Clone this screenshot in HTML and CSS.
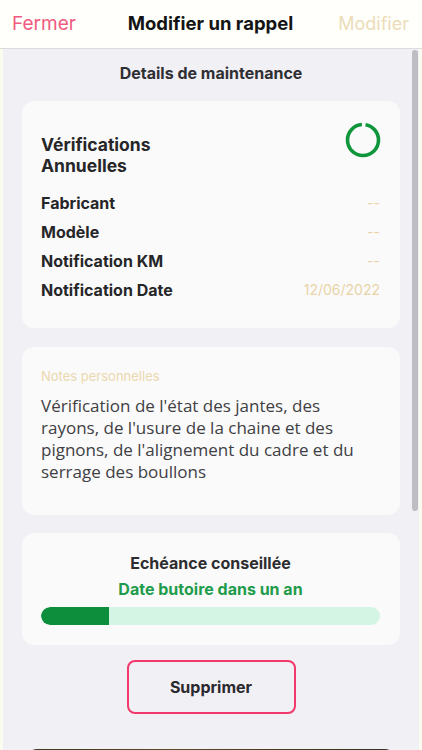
FILE: index.html
```html
<!DOCTYPE html>
<html lang="fr">
<head>
  <meta charset="UTF-8">
  <title>Modifier un rappel</title>
  <link rel="stylesheet" href="styles.css">
</head>
<body>
  <div class="screen">
    <header class="topbar">
      <span class="topbar-close">Fermer</span>
      <h1 class="topbar-title">Modifier un rappel</h1>
      <span class="topbar-edit">Modifier</span>
    </header>

    <main class="content">
      <h2 class="section-title">Details de maintenance</h2>

      <section class="card card-details">
        <div class="details-head">
          <h3 class="details-title">Vérifications<br>Annuelles</h3>
          <svg class="ring" width="36" height="36" viewBox="0 0 36 36">
            <circle cx="18" cy="18" r="15.5" fill="none" stroke="#0f963c" stroke-width="3.6"
              stroke-dasharray="93 4.4" stroke-dashoffset="-2.6" transform="rotate(-90 18 18)"/>
          </svg>
        </div>
        <div class="row"><span class="row-label">Fabricant</span><span class="row-value">--</span></div>
        <div class="row"><span class="row-label">Modèle</span><span class="row-value">--</span></div>
        <div class="row"><span class="row-label">Notification KM</span><span class="row-value">--</span></div>
        <div class="row"><span class="row-label">Notification Date</span><span class="row-value">12/06/2022</span></div>
      </section>

      <section class="card card-notes">
        <p class="notes-label">Notes personnelles</p>
        <p class="notes-text">Vérification de l'état des jantes, des rayons, de l'usure de la chaine et des pignons, de l'alignement du cadre et du serrage des boullons</p>
      </section>

      <section class="card card-due">
        <p class="due-title">Echéance conseillée</p>
        <p class="due-sub">Date butoire dans un an</p>
        <div class="bar"><div class="bar-fill" style="width: 20%"></div></div>
      </section>

      <div class="actions">
        <button class="btn-delete">Supprimer</button>
      </div>

      <div class="photo"></div>
    </main>

    <div class="scroll-thumb"></div>
  </div>
</body>
</html>
```

FILE: styles.css
```css
* {
  box-sizing: border-box;
}

body {
  margin: 0;
  font-family: 'Inter', 'Roboto', sans-serif;
  background: #fcfbef;
  color: #2b2b2d;
}

.screen {
  position: relative;
  width: 422px;
  height: 750px;
  overflow: hidden;
  display: flex;
  flex-direction: column;
}

.topbar {
  height: 49px;
  flex: none;
  display: grid;
  grid-template-columns: 1fr auto 1fr;
  align-items: center;
  padding: 0 13px 2px 12px;
  background: #fffffb;
  border-bottom: 1px solid #dcdcdc;
}

.topbar-close {
  font-size: 19px;
  color: #f05a80;
}

.topbar-title {
  margin: 0;
  font-size: 18.5px;
  font-weight: 700;
  color: #141414;
}

.topbar-edit {
  justify-self: end;
  font-size: 18px;
  color: #ecdcb9;
}

.content {
  flex: 1;
  margin: 0 3px;
  padding: 0 19px;
  background: #f1f0f5;
  overflow: hidden;
}

.section-title {
  margin: 14px 0 18px;
  font-size: 16px;
  line-height: 20px;
  font-weight: 700;
  text-align: center;
  color: #2f2f33;
}

.card {
  background: #fafafa;
  border-radius: 12px;
  margin-bottom: 18px;
}

.card-details {
  padding: 21px 20px 24px 19px;
  margin-bottom: 19px;
}

.details-head {
  display: flex;
  justify-content: space-between;
  align-items: flex-start;
  margin-bottom: 12px;
}

.details-title {
  margin: 12px 0 0;
  font-size: 17.5px;
  line-height: 21px;
  font-weight: 700;
  color: #262628;
}

.ring {
  display: block;
  margin-right: -1px;
}

.row {
  display: flex;
  justify-content: space-between;
  align-items: center;
  height: 29px;
}

.row-label {
  font-size: 16px;
  font-weight: 700;
  color: #262628;
}

.row-value {
  font-size: 14px;
  color: #e9d4a8;
}

.card-notes {
  padding: 21px 20px 32px 19px;
}

.notes-label {
  margin: 0 0 11px;
  font-size: 13px;
  line-height: 16px;
  color: #ecd8ad;
}

.notes-text {
  margin: 0;
  font-family: 'Open Sans', 'Roboto', sans-serif;
  font-size: 17px;
  line-height: 22px;
  color: #404044;
}

.card-due {
  padding: 20px 20px 20px 19px;
  text-align: center;
  margin-bottom: 15px;
}

.due-title {
  margin: 0 0 6px;
  font-size: 16px;
  line-height: 20px;
  font-weight: 700;
  color: #2d2d30;
}

.due-sub {
  margin: 0 0 8px;
  font-size: 16px;
  line-height: 20px;
  font-weight: 700;
  color: #1f9c4b;
}

.bar {
  height: 18px;
  border-radius: 9px;
  background: #d4f5e3;
  overflow: hidden;
}

.bar-fill {
  height: 100%;
  background: #0c8e3c;
  border-radius: 9px 0 0 9px;
}

.actions {
  display: flex;
  justify-content: center;
  margin-bottom: 35px;
}

.btn-delete {
  width: 169px;
  height: 54px;
  border: 2px solid #f2396c;
  border-radius: 8px;
  background: transparent;
  font-family: 'Inter', sans-serif;
  font-size: 16px;
  font-weight: 700;
  color: #2a2a2e;
}

.photo {
  height: 240px;
  margin: 0 5px;
  border-radius: 10px 10px 0 0;
  background: linear-gradient(90deg, #3a3a22, #5b4a26 40%, #2f3320);
}

.scroll-thumb {
  position: absolute;
  top: 50px;
  right: 4px;
  width: 6px;
  height: 461px;
  border-radius: 3px;
  background: #bebdc3;
}
```
